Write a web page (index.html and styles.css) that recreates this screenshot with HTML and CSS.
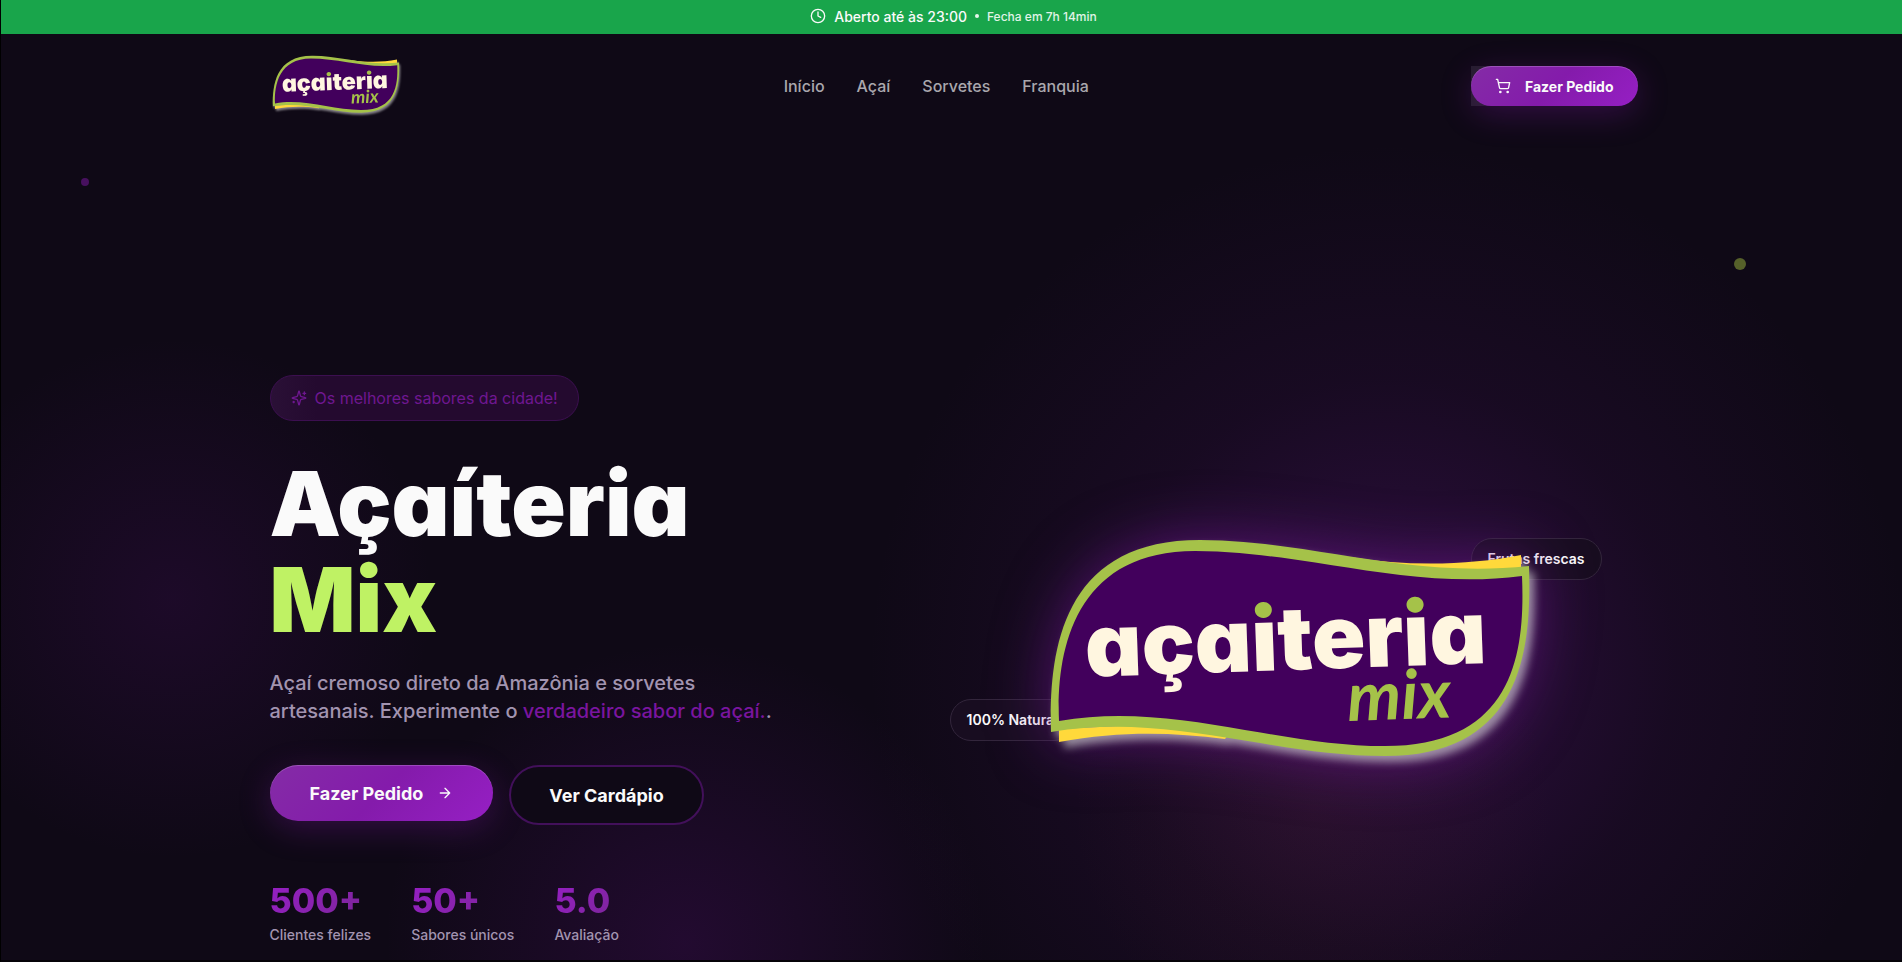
FILE: index.html
```html
<!DOCTYPE html>
<html lang="pt-BR">
<head>
  <meta charset="UTF-8" />
  <meta name="viewport" content="width=device-width, initial-scale=1.0"/>
  <title>Açaíteria Mix</title>
  <link rel="stylesheet" href="styles.css">
</head>
<body>

  <div class="status-bar">
    <svg class="icon" viewBox="0 0 24 24"><circle cx="12" cy="12" r="10"/><path d="M12 6v6l4 2"/></svg>
    <span class="status-open">Aberto até às 23:00</span>
    <span class="status-dot"></span>
    <span class="status-close">Fecha em 7h 14min</span>
  </div>

  <header class="header">
    <div class="container header-row">
      <a href="#" class="logo" aria-label="Açaíteria Mix">
        <svg class="logo-img" viewBox="0 0 500 250">
          <defs>
            <linearGradient id="letter-i" gradientUnits="userSpaceOnUse" x1="0" y1="0" x2="0" y2="200">
              <stop offset="0.48" stop-color="#a5c249"/>
              <stop offset="0.48" stop-color="#fff6e0"/>
            </linearGradient>
          </defs>
          <g id="logo-art">
            <path fill="#ffd93b" d="M19 199V212C80 201 130 202 185 209L200 190ZM310 27C370 37 430 35 481 25V45L320 45Z"/>
            <path fill="#a5c249" d="M11 202C9 120 22 10 160 10C270 10 365 49 489 36C491 110 488 226 345 226C230 226 130 182 11 202Z"/>
            <path fill="#42005c" d="M19 191C16 120 35 21 155 21C265 21 370 61 482 46C485 120 476 216 345 216C235 216 130 171 19 191Z"/>
            <text class="logo-name" x="46" y="147" transform="rotate(-2 46 147)">aça<tspan class="logo-i">i</tspan>ter<tspan class="logo-i">i</tspan>a</text>
            <text class="logo-mix" x="308" y="191" transform="rotate(-2 308 191)">mix</text>
          </g>
        </svg>
      </a>
      <nav class="nav">
        <a href="#inicio">Início</a>
        <a href="#acai">Açaí</a>
        <a href="#sorvetes">Sorvetes</a>
        <a href="#franquia">Franquia</a>
      </nav>
      <div class="order-box">
        <button class="btn btn-small" type="button">
          <svg class="icon" viewBox="0 0 24 24"><circle cx="8" cy="21" r="1"/><circle cx="19" cy="21" r="1"/><path d="M2 2h2l2.7 12.4a2 2 0 0 0 2 1.6h9.7a2 2 0 0 0 2-1.6L22 7H5"/></svg>
          Fazer Pedido
        </button>
      </div>
    </div>
  </header>

  <main class="hero" id="inicio">
    <span class="particle particle-purple"></span>
    <span class="particle particle-lime"></span>
    <div class="container hero-grid">
      <section class="hero-text">
        <div class="badge">
          <svg class="icon" viewBox="0 0 24 24"><path d="M9.9 15.5A2 2 0 0 0 8.5 14.1l-6.1-1.6a.5.5 0 0 1 0-1L8.5 9.9A2 2 0 0 0 9.9 8.5l1.6-6.1a.5.5 0 0 1 1 0l1.6 6.1a2 2 0 0 0 1.4 1.4l6.1 1.6a.5.5 0 0 1 0 1l-6.1 1.6a2 2 0 0 0-1.4 1.4l-1.6 6.1a.5.5 0 0 1-1 0zM20 3v4M22 5h-4M4 17v2M5 18H3"/></svg>
          Os melhores sabores da cidade!
        </div>
        <h1>Açaíteria <span>Mix</span></h1>
        <p class="lead">Açaí cremoso direto da Amazônia e sorvetes artesanais. Experimente o <span>verdadeiro sabor do açaí.</span>.</p>
        <div class="actions">
          <button class="btn btn-large" type="button">
            Fazer Pedido
            <svg class="icon" viewBox="0 0 24 24"><path d="M5 12h14M12 5l7 7-7 7"/></svg>
          </button>
          <button class="btn-outline" type="button">Ver Cardápio</button>
        </div>
        <dl class="stats">
          <div><dd>500+</dd><dt>Clientes felizes</dt></div>
          <div><dd>50+</dd><dt>Sabores únicos</dt></div>
          <div><dd>5.0</dd><dt>Avaliação</dt></div>
        </dl>
      </section>
      <section class="hero-visual">
        <div class="pill pill-right">Frutas frescas</div>
        <div class="pill pill-left">100% Natural</div>
        <svg class="hero-logo" viewBox="0 0 500 250"><use href="#logo-art"/></svg>
      </section>
    </div>
  </main>

</body>
</html>
```

FILE: styles.css
```css
* {
  box-sizing: border-box;
}

body {
  margin: 0;
  min-height: 100vh;
  display: flex;
  flex-direction: column;
  overflow: hidden;
  border-left: 1px solid #000;
  background-color: #0f0916;
  color: #fafafa;
  font-family: Inter, "Open Sans", sans-serif;
}

a {
  color: inherit;
  text-decoration: none;
}

.icon {
  width: 16px;
  height: 16px;
  flex: none;
  fill: none;
  stroke: currentColor;
  stroke-width: 2;
  stroke-linecap: round;
  stroke-linejoin: round;
}

.container {
  width: 100%;
  max-width: 1400px;
  margin: 0 auto;
  padding: 0 14px 0 18px;
}

/* opening hours */
.status-bar {
  display: flex;
  align-items: center;
  justify-content: center;
  gap: 8px;
  height: 34px;
  padding: 0 0 2px 4px;
  background-color: #19a54b;
  font-size: 14px;
  font-weight: 500;
}

.status-dot {
  width: 4px;
  height: 4px;
  border-radius: 50%;
  background-color: #e8f6ed;
}

.status-close {
  font-size: 12px;
  color: #e0f4e7;
}

/* header */
.header {
  position: relative;
  z-index: 1;
}

.header-row {
  display: flex;
  justify-content: space-between;
  align-items: center;
  height: 104px;
}

.logo-img {
  display: block;
  width: 132px;
  height: 66px;
  overflow: visible;
  filter: drop-shadow(1px 2px 1px rgba(255, 255, 255, 0.5));
}

.logo-name {
  font-family: Inter, sans-serif;
  font-size: 88px;
  font-weight: 900;
  font-feature-settings: "cv11";
  fill: #fff6e0;
}

.logo-i {
  fill: url(#letter-i);
}

.logo-mix {
  font-family: Lato, sans-serif;
  font-size: 68px;
  font-style: italic;
  font-weight: 700;
  fill: #a5c249;
}

.nav {
  display: flex;
  gap: 32px;
  font-size: 16px;
  font-weight: 500;
  color: #a9a7ad;
}

.order-box {
  background: linear-gradient(to right, #241e2c 20px, transparent 20px);
}

.btn {
  display: flex;
  align-items: center;
  gap: 14px;
  border: 0;
  border-radius: 28px;
  background: linear-gradient(135deg, #842ca6 0%, #841bab 50%, #961fc4 100%);
  color: #fafafa;
  font-family: inherit;
  font-weight: 700;
  box-shadow: 0 8px 32px rgba(134, 28, 173, 0.3), inset 0 1px 0 rgba(255, 255, 255, 0.2);
}

.btn-small {
  height: 40px;
  padding: 0 24px;
  font-size: 14px;
}

.btn-large {
  height: 56px;
  padding: 0 40px;
  font-size: 18px;
}

.btn-outline {
  height: 60px;
  padding: 0 38px;
  border: 2px solid #42105a;
  border-radius: 30px;
  background-color: #0f0916;
  color: #fafafa;
  font-family: inherit;
  font-size: 18px;
  font-weight: 700;
}

/* hero */
.hero {
  flex: 1;
  position: relative;
  border-bottom: 2px solid #050308;
  background:
    radial-gradient(circle 240px at 69% 82%, rgba(120, 60, 40, 0.1), transparent),
    radial-gradient(circle 520px at 73% 64%, rgba(110, 25, 150, 0.34), rgba(90, 20, 120, 0.12) 55%, transparent),
    radial-gradient(circle 260px at 9% 56%, rgba(85, 15, 115, 0.2), transparent),
    radial-gradient(circle 300px at 36% 98%, rgba(85, 15, 115, 0.28), transparent);
}

.particle {
  position: absolute;
  border-radius: 50%;
}

.particle-purple {
  top: 40px;
  left: 80px;
  width: 8px;
  height: 8px;
  background-color: #47105e;
}

.particle-lime {
  top: 120px;
  right: 156px;
  width: 12px;
  height: 12px;
  background-color: #56612a;
}

.hero-grid {
  display: grid;
  grid-template-columns: 1fr 1fr;
  gap: 32px;
  padding-top: 237px;
}

.badge {
  display: inline-flex;
  align-items: center;
  gap: 8px;
  height: 46px;
  padding: 0 20px;
  border: 1px solid #3c0f50;
  border-radius: 23px;
  background: linear-gradient(to right, #2a1036, #240a2f 15%);
  color: #6f1791;
  font-size: 16px;
}

h1 {
  margin: 35px 0 21px;
  font-size: 90px;
  font-weight: 900;
  font-feature-settings: "cv11";
  line-height: 96px;
}

h1 span {
  display: block;
  color: #bff264;
}

.lead {
  max-width: 520px;
  margin: 0 0 40px;
  color: #a294b0;
  font-size: 20px;
  font-weight: 500;
  line-height: 28px;
}

.lead span {
  color: #7a159f;
}

.actions {
  display: flex;
  align-items: flex-start;
  gap: 16px;
}

.stats {
  display: flex;
  gap: 40px;
  margin: 56px 0 0;
}

.stats div {
  display: flex;
  flex-direction: column;
}

.stats dd {
  margin: 0;
  font-size: 34px;
  font-weight: 800;
  line-height: 40px;
  background: linear-gradient(135deg, #961fc4, #7a2696);
  background-clip: text;
  color: transparent;
}

.stats dt {
  color: #a294b0;
  font-size: 14px;
  font-weight: 500;
  line-height: 28px;
}

.hero-visual {
  position: relative;
  padding: 155px 0 0 70px;
}

.hero-logo {
  position: relative;
  display: block;
  width: 500px;
  overflow: visible;
  filter: drop-shadow(5px 6px 4px rgba(220, 225, 220, 0.6)) drop-shadow(0 0 30px rgba(122, 21, 159, 0.6));
}

.pill {
  position: absolute;
  height: 42px;
  padding: 0 16px;
  border: 1px solid #33263c;
  border-radius: 21px;
  background-color: #180d20;
  font-size: 14px;
  font-weight: 600;
  line-height: 40px;
}

.pill-right {
  top: 163px;
  right: 36px;
}

.pill-left {
  top: 324px;
  left: -20px;
}
```
